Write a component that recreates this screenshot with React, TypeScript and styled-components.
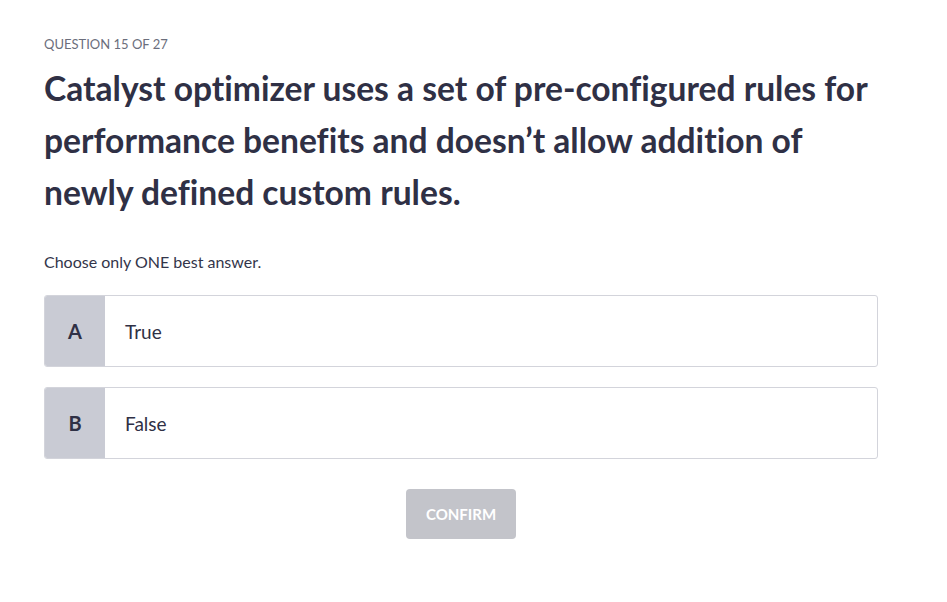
import React from "react";
import styled, { createGlobalStyle } from "styled-components";

const Global = createGlobalStyle`
  html, body { margin: 0; padding: 0; background: #ffffff; }
  body { font-family: Lato, "Open Sans", sans-serif; -webkit-font-smoothing: antialiased; font-variant-ligatures: none; }
  * { box-sizing: border-box; }
`;

const Page = styled.main`
  padding: 34px 69px 40px 44px;
  width: 947px;
`;

const Label = styled.div`
  font-size: 13px;
  color: #6b6e7c;
  line-height: 20px;
`;

const Heading = styled.h1`
  margin: 8px 0 0;
  font-size: 33.6px;
  font-weight: 700;
  line-height: 52px;
  color: #2f3045;
`;

const Instruction = styled.p`
  margin: 34px 0 0;
  font-size: 16px;
  line-height: 20px;
  color: #33354a;
`;

const Options = styled.div`
  margin-top: 23px;
  display: flex;
  flex-direction: column;
  gap: 20px;
`;

const Option = styled.button`
  display: flex;
  align-items: stretch;
  height: 72px;
  width: 100%;
  padding: 0;
  border: 1px solid #d3d4db;
  border-radius: 3px;
  background: #ffffff;
  overflow: hidden;
  cursor: pointer;
  font-family: inherit;
  text-align: left;
`;

const Letter = styled.span`
  flex: 0 0 60px;
  display: flex;
  align-items: center;
  justify-content: center;
  background: #c9cbd4;
  font-size: 20px;
  font-weight: 700;
  color: #2f3045;
`;

const OptionText = styled.span`
  display: flex;
  align-items: center;
  padding-left: 20px;
  font-size: 19px;
  color: #2f3045;
`;

const Actions = styled.div`
  display: flex;
  justify-content: center;
  margin-top: 30px;
`;

const Confirm = styled.button`
  width: 110px;
  height: 50px;
  border: none;
  border-radius: 4px;
  background: #c3c4ca;
  color: #ffffff;
  font-family: inherit;
  font-weight: 700;
  font-size: 15px;
`;

export default function App() {
  const options = [
    { key: "A", text: "True" },
    { key: "B", text: "False" },
  ];
  return (
    <Page>
      <Global />
      <Label>QUESTION 15 OF 27</Label>
      <Heading>
        Catalyst optimizer uses a set of pre-configured rules for performance benefits and doesn’t allow addition of newly defined custom rules.
      </Heading>
      <Instruction>Choose only ONE best answer.</Instruction>
      <Options>
        {options.map((o) => (
          <Option key={o.key}>
            <Letter>{o.key}</Letter>
            <OptionText>{o.text}</OptionText>
          </Option>
        ))}
      </Options>
      <Actions>
        <Confirm disabled>CONFIRM</Confirm>
      </Actions>
    </Page>
  );
}
